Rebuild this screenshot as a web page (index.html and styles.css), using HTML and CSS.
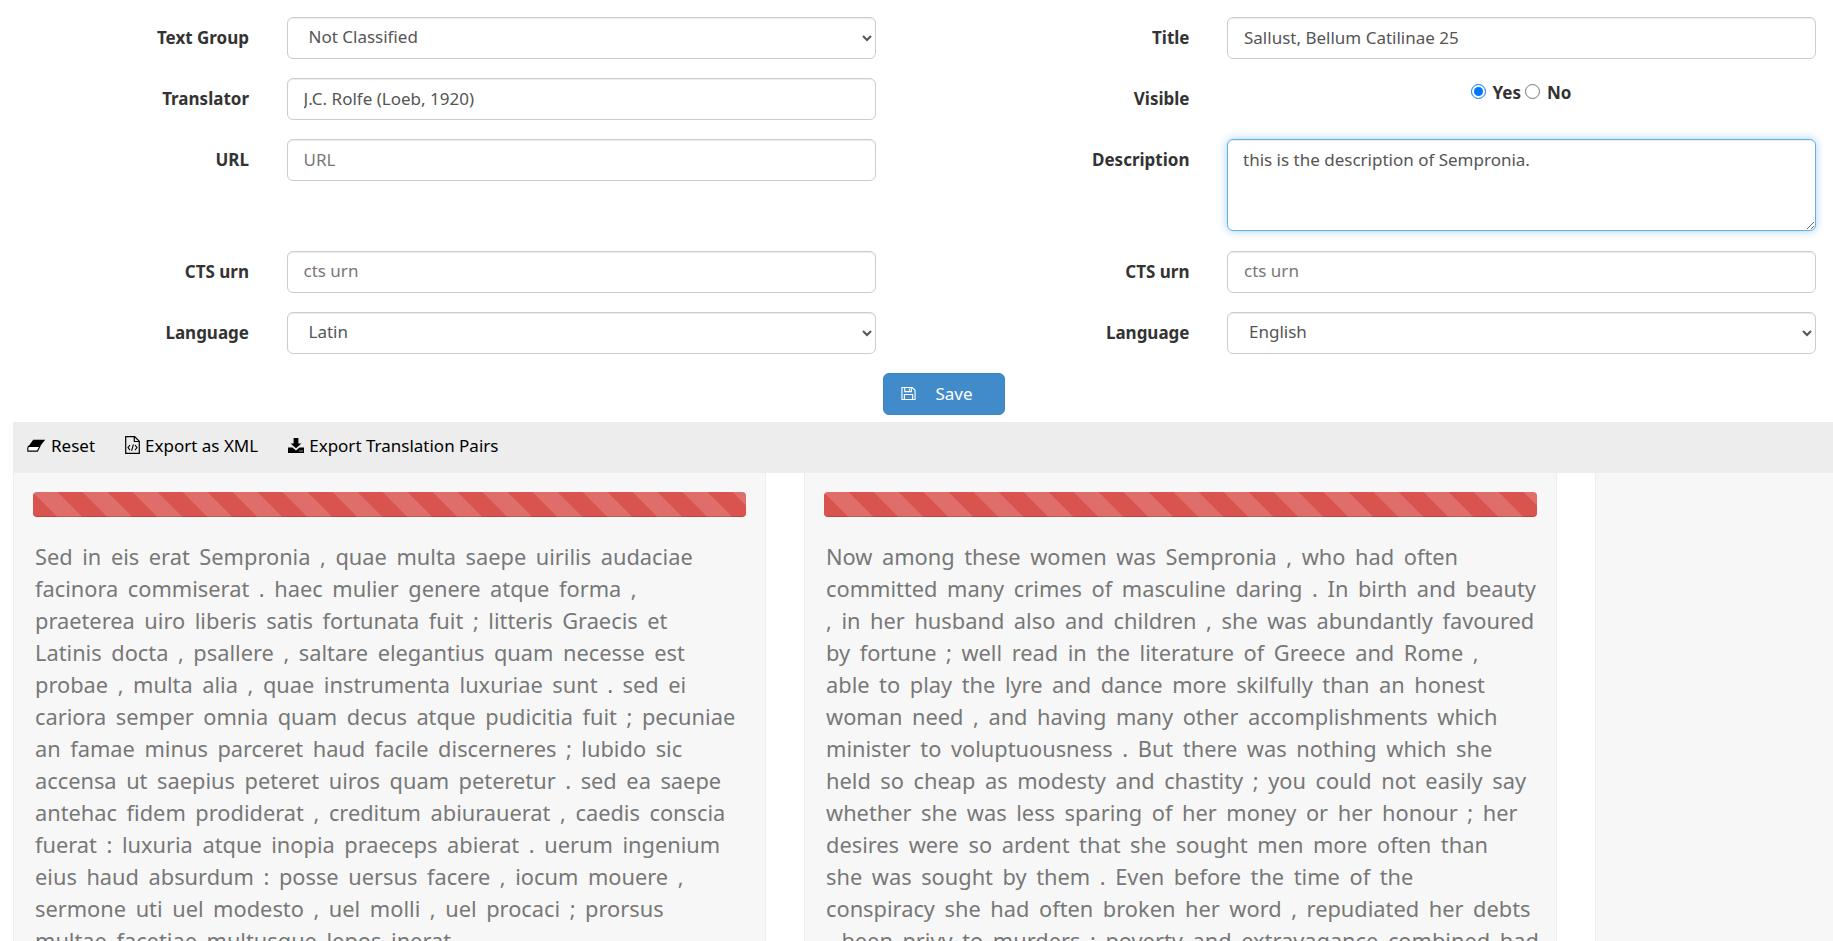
FILE: index.html
```html
<!DOCTYPE html>
<html lang="en">
<head>
<meta charset="utf-8">
<title>Alignment</title>
<link rel="stylesheet" href="styles.css">
</head>
<body>
<form class="meta">
  <label class="lbl">Text Group</label>
  <select class="ctl sel"><option>Not Classified</option></select>
  <label class="lbl">Title</label>
  <input class="ctl" value="Sallust, Bellum Catilinae 25">

  <label class="lbl">Translator</label>
  <input class="ctl" value="J.C. Rolfe (Loeb, 1920)">
  <label class="lbl">Visible</label>
  <div class="radios">
    <input type="radio" name="vis" checked><b class="opt">Yes</b><input type="radio" name="vis"><b class="opt">No</b>
  </div>

  <label class="lbl">URL</label>
  <input class="ctl" placeholder="URL">
  <label class="lbl">Description</label>
  <textarea class="ctl area">this is the description of Sempronia.</textarea>

  <label class="lbl">CTS urn</label>
  <input class="ctl" placeholder="cts urn">
  <label class="lbl">CTS urn</label>
  <input class="ctl" placeholder="cts urn">

  <label class="lbl">Language</label>
  <select class="ctl sel"><option>Latin</option></select>
  <label class="lbl">Language</label>
  <select class="ctl sel"><option>English</option></select>
</form>

<div class="save-row">
  <button type="button" class="save">
    <svg class="save-ico" viewBox="0 0 16 16" fill="none" stroke="#fff" stroke-width="1.2"><path d="M1 1.6h11l3 3v9.8H1z"/><path d="M4 1.6v4.4h7V1.6M9 2.6v2.4"/><path d="M3.6 14.4V9h8.8v5.4"/></svg>
    <span>Save</span>
  </button>
</div>

<nav class="tools">
  <a class="tool">
    <svg class="ico-eraser" viewBox="0 0 20 14"><path d="M6.5 .8H19.4L13.6 8H1.2z" fill="#000"/><path d="M1.2 8h12.4L11 13H.7L.6 10.4z" fill="#fff" stroke="#000" stroke-width="1.2"/></svg>
    Reset</a>
  <a class="tool">
    <svg class="ico-file" viewBox="0 0 15 18" fill="none" stroke="#000" stroke-width="1.2"><path d="M.7.7h9l4.6 4.6v12H.7z"/><path d="M9.3.9v4.6h4.8"/><path d="M5 9l-2 2.6L5 14.2M10 9l2 2.6-2 2.6M8.4 8.4l-1.8 6.4" stroke-width="1.1"/></svg>
    Export as XML</a>
  <a class="tool">
    <svg class="ico-dl" viewBox="0 0 16 15"><path d="M5.6 0h4.8v5.4h3L8 10.2 2.6 5.4h3z" fill="#000"/><path d="M0 9.6h4.4L8 12.6l3.6-3H16V15H0z" fill="#000"/><path d="M11.4 12.4h1.2v1.2h-1.2zM13.4 12.4h1.2v1.2h-1.2z" fill="#eee"/></svg>
    Export Translation Pairs</a>
</nav>

<main class="panels">
  <section class="panel">
    <div class="bar"></div>
    <p class="txt"><span>Sed in eis erat Sempronia , quae multa saepe uirilis audaciae</span><span>facinora commiserat . haec mulier genere atque forma ,</span><span>praeterea uiro liberis satis fortunata fuit ; litteris Graecis et</span><span>Latinis docta , psallere , saltare elegantius quam necesse est</span><span>probae , multa alia , quae instrumenta luxuriae sunt . sed ei</span><span>cariora semper omnia quam decus atque pudicitia fuit ; pecuniae</span><span>an famae minus parceret haud facile discerneres ; lubido sic</span><span>accensa ut saepius peteret uiros quam peteretur . sed ea saepe</span><span>antehac fidem prodiderat , creditum abiurauerat , caedis conscia</span><span>fuerat : luxuria atque inopia praeceps abierat . uerum ingenium</span><span>eius haud absurdum : posse uersus facere , iocum mouere ,</span><span>sermone uti uel modesto , uel molli , uel procaci ; prorsus</span><span>multae facetiae multusque lepos inerat .</span></p>
  </section>
  <section class="panel">
    <div class="bar"></div>
    <p class="txt"><span>Now among these women was Sempronia , who had often</span><span>committed many crimes of masculine daring . In birth and beauty</span><span>, in her husband also and children , she was abundantly favoured</span><span>by fortune ; well read in the literature of Greece and Rome ,</span><span>able to play the lyre and dance more skilfully than an honest</span><span>woman need , and having many other accomplishments which</span><span>minister to voluptuousness . But there was nothing which she</span><span>held so cheap as modesty and chastity ; you could not easily say</span><span>whether she was less sparing of her money or her honour ; her</span><span>desires were so ardent that she sought men more often than</span><span>she was sought by them . Even before the time of the</span><span>conspiracy she had often broken her word , repudiated her debts</span><span>, been privy to murders ; poverty and extravagance combined had</span></p>
  </section>
  <section class="panel panel-empty"></section>
</main>
</body>
</html>
```

FILE: styles.css
```css
html, body { height: 100%; overflow: hidden; }
body {
  margin: 0;
  background: #fff;
  font-family: "Noto Sans", "Open Sans", sans-serif;
  font-size: 17px;
  color: #333;
}

.meta {
  display: grid;
  grid-template-columns: 249px 589px 1fr 589px;
  column-gap: 37.5px;
  row-gap: 19.2px;
  padding: 17px 17px 0 0;
  align-items: start;
}
.lbl {
  font-weight: 700;
  text-align: right;
  line-height: 41px;
  color: #333;
}
.ctl {
  box-sizing: border-box;
  width: 100%;
  height: 42px;
  margin: 0;
  padding: 4px 16px 6px;
  border: 1px solid #ccc;
  border-radius: 6px;
  background: #fff;
  box-shadow: inset 0 1px 1px rgba(0, 0, 0, .075);
  font: 17px "Noto Sans", "Open Sans", sans-serif;
  color: #555;
  outline: none;
}
.ctl::placeholder { color: #777; }
.sel { padding: 3px 17px 6px; }
.area {
  height: 92px;
  padding: 8px 15px 6px;
  border-color: #66afe9;
  box-shadow: inset 0 1px 1px rgba(0, 0, 0, .075), 0 0 8px rgba(102, 175, 233, .6);
}
.radios {
  display: flex;
  justify-content: center;
  align-items: center;
  height: 30px;
  padding-left: 3px;
  line-height: 30px;
}
.radios input { width: 15px; height: 15px; margin: 0 7px 4px 0; }
.opt { margin-right: 4px; }

.save-row {
  display: flex;
  justify-content: center;
  padding: 19.2px 0 7px;
  margin-left: 54px;
}
.save {
  display: flex;
  align-items: center;
  box-sizing: border-box;
  width: 122px;
  height: 42px;
  padding: 0 0 1px 17px;
  border: 1px solid #3d84c4;
  border-radius: 6px;
  background: #428bca;
  color: #fff;
  font: 17px "Noto Sans", "Open Sans", sans-serif;
}
.save-ico { width: 15px; height: 15px; margin-right: 20px; }

.tools {
  display: flex;
  align-items: center;
  gap: 30px;
  height: 51px;
  margin-left: 13px;
  padding: 0 0 4px 14px;
  box-sizing: border-box;
  background: #ededed;
  color: #000;
}
.tool { display: flex; align-items: center; gap: 5px; }
.ico-eraser { width: 19px; height: 13px; }
.ico-file { width: 15px; height: 18px; }
.ico-dl { width: 16px; height: 15px; }

.panels {
  display: grid;
  grid-template-columns: 753px 753px 1fr;
  column-gap: 38px;
  margin-left: 13px;
}
.panel {
  box-sizing: border-box;
  height: 600px;
  padding: 19px 19px 0;
  background: #f7f7f7;
  border: 1px solid #eee;
  border-width: 0 1px;
}
.panel-empty { border-right: 0; }
.bar {
  height: 25px;
  border-radius: 4px;
  background-color: #d9534f;
  background-image: linear-gradient(45deg, rgba(255,255,255,.15) 25%, transparent 25%, transparent 50%, rgba(255,255,255,.15) 50%, rgba(255,255,255,.15) 75%, transparent 75%, transparent);
  background-size: 50px 50px;
  box-shadow: inset 0 -1px 0 rgba(0, 0, 0, .15);
}
.txt {
  margin: 24px 0 0 2px;
  font-size: 21.8px;
  line-height: 32px;
  color: #777;
  word-spacing: 3.9px;
  white-space: nowrap;
}
.txt span { display: block; }
```
